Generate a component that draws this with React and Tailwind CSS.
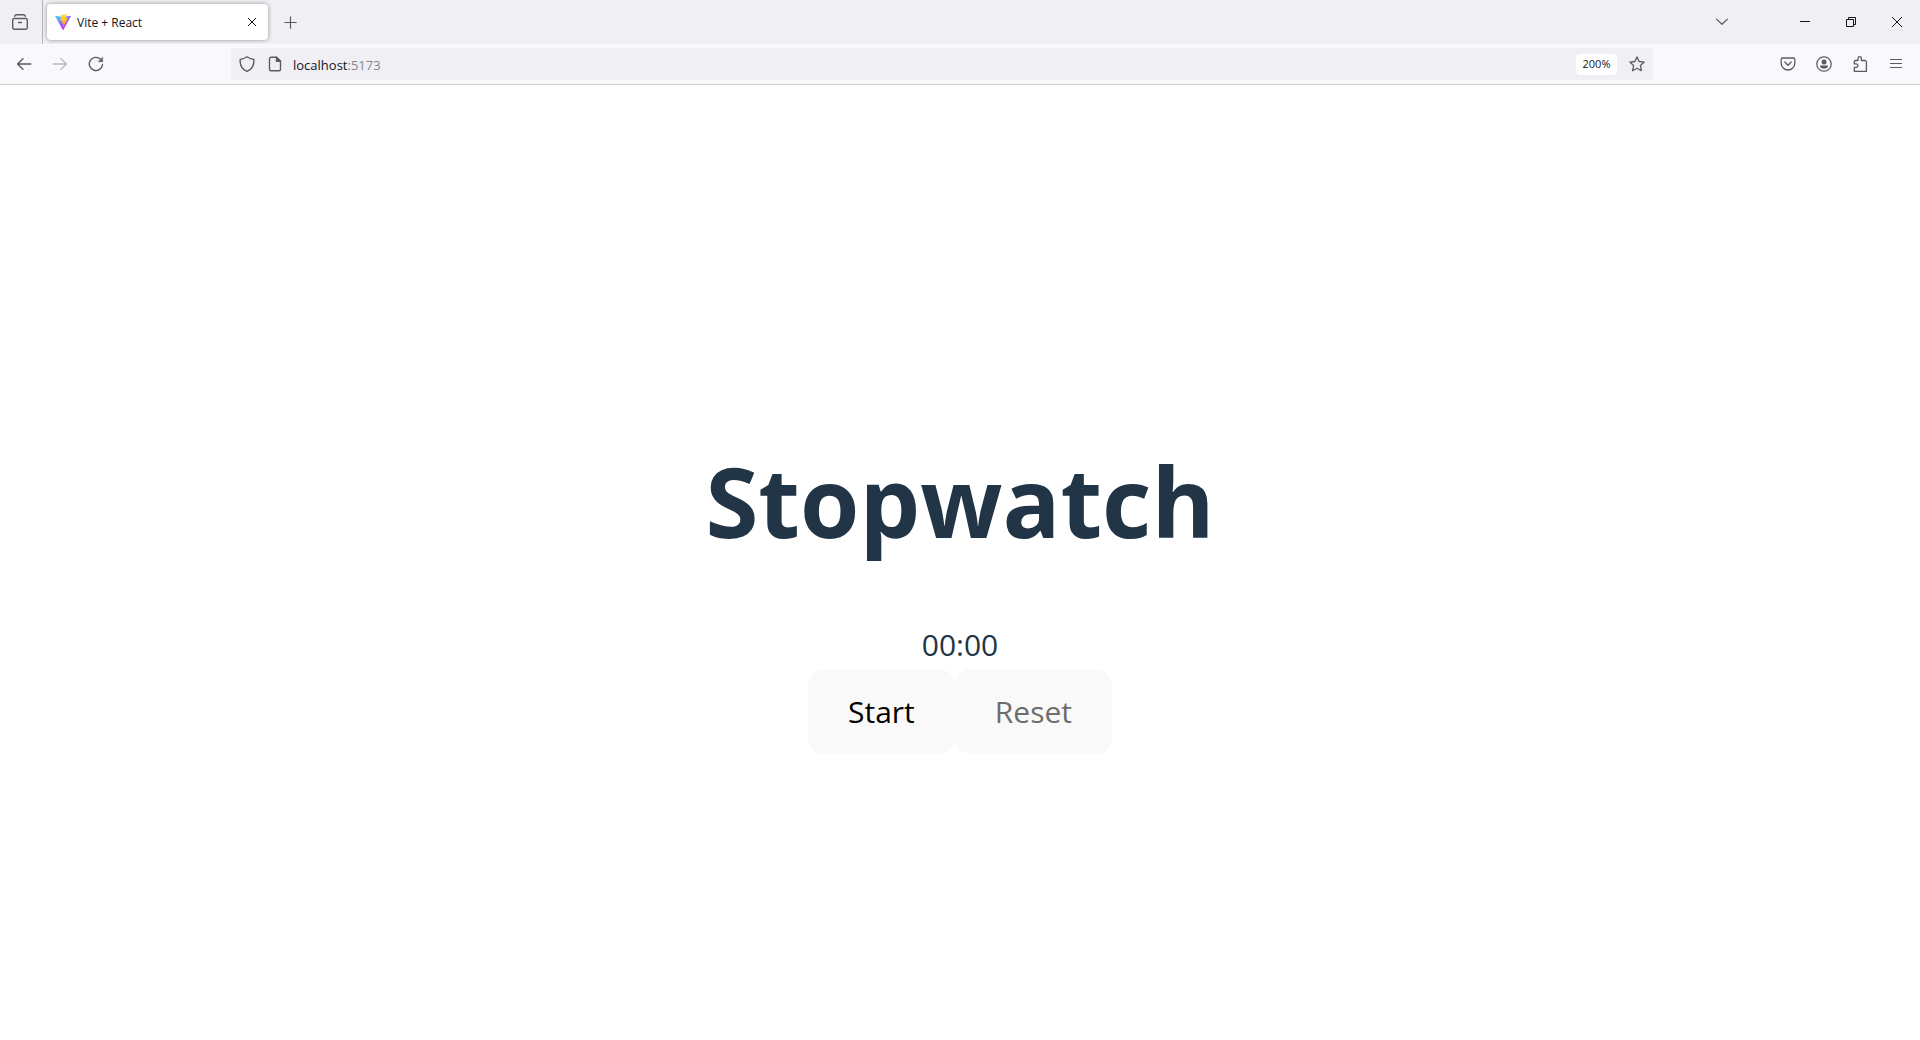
import React, { useEffect, useState } from "react";

function Icon({ size = 16, box = "0 0 16 16", width = 1.25, className = "", children }) {
  return (
    <svg
      width={size}
      height={size}
      viewBox={box}
      fill="none"
      stroke="currentColor"
      strokeWidth={width}
      strokeLinecap="round"
      strokeLinejoin="round"
      className={className}
      aria-hidden="true"
    >
      {children}
    </svg>
  );
}

function ToolButton({ label, className = "", disabled, children }) {
  return (
    <button
      type="button"
      aria-label={label}
      disabled={disabled}
      className={`flex h-8 w-9 shrink-0 items-center justify-center text-[#5b5b66] ${className}`}
    >
      {children}
    </button>
  );
}

function WindowButton({ label, children }) {
  return (
    <button
      type="button"
      aria-label={label}
      className="flex h-11 w-[46px] shrink-0 items-center justify-center text-[#15141a]"
    >
      <svg
        width="10"
        height="10"
        viewBox="0 0 10 10"
        fill="none"
        stroke="currentColor"
        strokeWidth="1"
        aria-hidden="true"
      >
        {children}
      </svg>
    </button>
  );
}

function ViteLogo() {
  return (
    <svg width="16" height="16" viewBox="0 0 256 257" className="shrink-0" aria-hidden="true">
      <defs>
        <linearGradient id="vite-body" x1="-.8%" x2="57.6%" y1="7.7%" y2="78.4%">
          <stop offset="0%" stopColor="#41D1FF" />
          <stop offset="100%" stopColor="#BD34FE" />
        </linearGradient>
        <linearGradient id="vite-bolt" x1="43.4%" x2="50.3%" y1="2.2%" y2="89%">
          <stop offset="0%" stopColor="#FFEA83" />
          <stop offset="8.3%" stopColor="#FFDD35" />
          <stop offset="100%" stopColor="#FFA800" />
        </linearGradient>
      </defs>
      <path
        fill="url(#vite-body)"
        d="M255.153 37.938L134.897 252.976c-2.483 4.44-8.862 4.466-11.382.048L.875 37.958c-2.746-4.814 1.371-10.646 6.827-9.67l120.385 21.517a6.537 6.537 0 0 0 2.322-.004l117.867-21.483c5.438-.991 9.574 4.796 6.877 9.62Z"
      />
      <path
        fill="url(#vite-bolt)"
        d="M185.432.063L96.44 17.501a3.268 3.268 0 0 0-2.634 3.014l-5.474 92.456a3.268 3.268 0 0 0 3.997 3.378l24.777-5.718c2.318-.535 4.413 1.507 3.936 3.838l-7.361 36.047c-.495 2.426 1.782 4.5 4.151 3.78l15.304-4.649c2.372-.72 4.652 1.36 4.15 3.788l-11.698 56.621c-.732 3.542 3.979 5.473 5.943 2.437l1.313-2.028l72.516-144.72c1.215-2.423-.88-5.186-3.54-4.672l-25.505 4.922c-2.396.462-4.435-1.77-3.759-4.114l16.646-57.705c.677-2.35-1.37-4.583-3.769-4.113Z"
      />
    </svg>
  );
}

function TabStrip() {
  return (
    <header className="flex h-11 items-center bg-[#f0f0f4]">
      <div className="flex h-11 w-[43px] shrink-0 items-center justify-center border-r border-[#b4b4ba]">
        <button type="button" aria-label="View recent browsing" className="pr-0.5 text-[#5b5b66]">
          <Icon width={1.4}>
            <path d="M2.600 2.300C3 1.100 3.700.8 4.600.8h6.800c.9 0 1.600.3 2 1.500" />
            <rect x=".7" y="4.500" width="14.600" height="10.700" rx="1.700" />
            <path d="M6.500 8.500h3" />
          </Icon>
        </button>
      </div>
      <div className="ml-1 flex h-9 w-[221px] items-center rounded bg-white pr-1 pl-2 shadow-[0_0_4px_rgba(0,0,0,0.4)]">
        <ViteLogo />
        <span className="ml-1.5 flex-1 pt-px text-[12px] leading-4 text-[#15141a]">
          Vite + React
        </span>
        <button
          type="button"
          aria-label="Close tab"
          className="flex size-6 items-center justify-center text-[#15141a]"
        >
          <Icon size={10} width={1.6}>
            <path d="M2 2l12 12M14 2L2 14" />
          </Icon>
        </button>
      </div>
      <button
        type="button"
        aria-label="New tab"
        className="ml-1 flex h-9 w-9 items-center justify-center text-[#5b5b66]"
      >
        <Icon size={13} box="0 0 13 13" width={1.2}>
          <path d="M6.500.8v11.400M.8 6.500h11.400" />
        </Icon>
      </button>
      <div className="flex-1" />
      <ToolButton label="List all tabs" className="mr-[42px]">
        <Icon size={12} width={1.7}>
          <path d="M.8 4.2L8 11l7.2-6.8" />
        </Icon>
      </ToolButton>
      <WindowButton label="Minimize">
        <path d="M0 4.5h10" />
      </WindowButton>
      <WindowButton label="Restore">
        <path d="M.5 2.5h7v7h-7zM2.5 2.5v-2h7v7h-2" />
      </WindowButton>
      <WindowButton label="Close">
        <path d="M0 0l10 10M10 0L0 10" />
      </WindowButton>
    </header>
  );
}

function AddressBar() {
  return (
    <div className="flex h-8 flex-1 items-center rounded bg-[#f0f0f4] pr-2 pl-2 text-[#5b5b66]">
      <button type="button" aria-label="Tracking protection">
        <Icon width={1.4}>
          <path d="M8 .8c2 1.5 4.4 2.4 6.8 2.7.4 5-1.8 9.8-6.8 11.9C3 13.3.8 8.500 1.200 3.500 3.600 3.200 6 2.300 8 .8z" />
        </Icon>
      </button>
      <button type="button" aria-label="Site information" className="ml-3">
        <Icon width={1.4}>
          <path d="M9.500 1.200H4A1.500 1.500 0 0 0 2.500 2.700v10.600A1.500 1.500 0 0 0 4 14.800h8a1.500 1.500 0 0 0 1.500-1.500V5.200z" />
          <path d="M9.500 1.200v4h4z" fill="currentColor" />
        </Icon>
      </button>
      <a
        href="http://localhost:5173"
        className="ml-2.5 flex-1 pt-0.5 text-[13px] leading-5 text-[#15141a]"
      >
        localhost<span className="text-[#85858d]">:5173</span>
      </a>
      <button
        type="button"
        aria-label="Reset zoom level"
        className="h-[21px] w-[41px] rounded-sm bg-white text-[11px] leading-5 text-[#15141a]"
      >
        200%
      </button>
      <button type="button" aria-label="Bookmark this page" className="ml-3">
        <Icon width={1.3}>
          <path d="M8 .9l2.100 4.600 5.100.6-3.800 3.400 1 5.200L8 12.200l-4.400 2.500 1-5.200L.8 6.100l5.100-.6z" />
        </Icon>
      </button>
    </div>
  );
}

function Toolbar() {
  return (
    <nav
      aria-label="Browser navigation"
      className="flex h-[41px] items-center border-b border-[#cccccc] bg-[#f9f9fb] px-1.5"
    >
      <ToolButton label="Back">
        <Icon width={1.4}>
          <path d="M14.800 8H1.500M7 2.800L1.500 8 7 13.200" />
        </Icon>
      </ToolButton>
      <ToolButton label="Forward" disabled className="opacity-40">
        <Icon width={1.4}>
          <path d="M1.200 8h13.300M9 2.800L14.500 8 9 13.200" />
        </Icon>
      </ToolButton>
      <ToolButton label="Reload">
        <Icon width={1.4}>
          <path d="M14.500 8.500A6.600 6.600 0 1 1 12.400 3.100" />
          <path d="M14.700 1.400v4.300h-4.300z" fill="currentColor" strokeWidth=".5" />
        </Icon>
      </ToolButton>
      <div className="w-[117px] shrink-0" />
      <AddressBar />
      <div className="w-[117px] shrink-0" />
      <ToolButton label="Save to Pocket">
        <Icon width={1.3}>
          <path d="M2.700 2h10.600a1.500 1.500 0 0 1 1.500 1.500v3.700a6.800 6.800 0 0 1-13.600 0V3.500A1.500 1.500 0 0 1 2.700 2z" />
          <path d="M4.800 6L8 9.200 11.200 6" />
        </Icon>
      </ToolButton>
      <ToolButton label="Account">
        <Icon width={1.3}>
          <circle cx="8" cy="8" r="7.200" />
          <circle cx="8" cy="5.900" r="2.500" fill="currentColor" stroke="none" />
          <path
            d="M4.800 9.500h6.400c.6 0 .9.400.7.900-.7 1.500-2.200 2.200-3.900 2.200s-3.200-.7-3.900-2.200c-.2-.5.1-.9.700-.9z"
            fill="currentColor"
            stroke="none"
          />
        </Icon>
      </ToolButton>
      <ToolButton label="Extensions">
        <Icon width={1.3}>
          <path d="M6 4.500V2.400a1.700 1.700 0 0 1 3.400 0v2.100h3.700a1.300 1.300 0 0 1 1.300 1.300v9.500H2.300v-4h1.900a1.700 1.700 0 0 0 0-3.400H2.300V5.800a1.300 1.300 0 0 1 1.300-1.300z" />
        </Icon>
      </ToolButton>
      <ToolButton label="Open application menu">
        <Icon size={12} box="0 0 12 12" width={1.2}>
          <path d="M.5 1.500h11M.5 5.500h11M.5 9.500h11" />
        </Icon>
      </ToolButton>
    </nav>
  );
}

function Stopwatch() {
  const [seconds, setSeconds] = useState(0);
  const [running, setRunning] = useState(false);

  useEffect(() => {
    if (!running) return undefined;
    const timer = setInterval(() => setSeconds((s) => s + 1), 1000);
    return () => clearInterval(timer);
  }, [running]);

  const pad = (n) => String(n).padStart(2, "0");

  return (
    <main className="flex flex-1 flex-col items-center justify-center py-16 text-[30px] text-[#213547]">
      <h1 className="mt-[74px] mb-16 text-[96px] leading-[112px] font-bold">Stopwatch</h1>
      <div role="timer" className="leading-[48px]">
        {pad(Math.floor(seconds / 60))}:{pad(seconds % 60)}
      </div>
      <div className="flex">
        <button
          type="button"
          onClick={() => setRunning((r) => !r)}
          className="h-[85px] rounded-2xl bg-[#f9f9f9] px-10 text-black"
        >
          {running ? "Stop" : "Start"}
        </button>
        <button
          type="button"
          disabled={seconds === 0}
          onClick={() => {
            setRunning(false);
            setSeconds(0);
          }}
          className="h-[85px] rounded-2xl bg-[#f9f9f9] px-10 text-black disabled:text-[#6d6d6d]"
        >
          Reset
        </button>
      </div>
    </main>
  );
}

export default function App() {
  return (
    <div className="flex min-h-screen flex-col bg-white font-['Open_Sans','Noto_Sans',sans-serif]">
      <TabStrip />
      <Toolbar />
      <Stopwatch />
    </div>
  );
}
